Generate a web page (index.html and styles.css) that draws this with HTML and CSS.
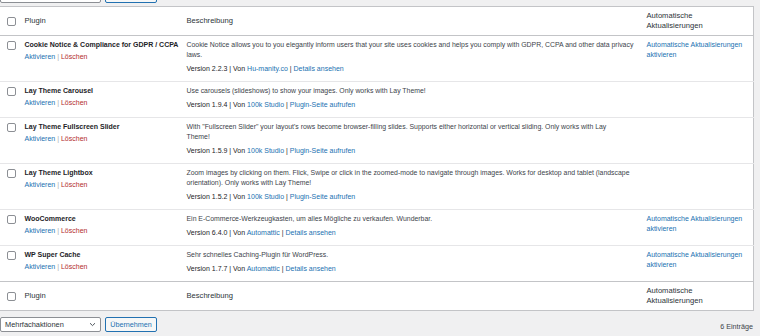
FILE: index.html
```html
<!DOCTYPE html>
<html>
<head>
    <meta charset="UTF-8">
    <title>Plugins</title>
    <link rel="stylesheet" href="styles.css">
</head>
<body>
    <div class="tablenav top">
        <div class="bulk">
            <div class="select"><span>Mehrfachaktionen</span><svg width="7" height="5" viewBox="0 0 7 5"><path d="M1 1.2 L3.5 3.6 L6 1.2" fill="none" stroke="#50575e" stroke-width="1"/></svg></div>
            <button class="apply">Übernehmen</button>
        </div>
    </div>

    <table class="plugins">
        <colgroup>
            <col class="col-cb">
            <col class="col-name">
            <col class="col-desc">
            <col class="col-auto">
        </colgroup>
        <thead>
            <tr>
                <td class="check"><span class="cb"></span></td>
                <th>Plugin</th>
                <th>Beschreibung</th>
                <th>Automatische Aktualisierungen</th>
            </tr>
        </thead>
        <tbody>
            <tr>
                <td class="check"><span class="cb"></span></td>
                <td class="name">
                    <strong>Cookie Notice &amp; Compliance for GDPR / CCPA</strong>
                    <div class="actions"><a class="link">Aktivieren</a> <span class="sep">|</span> <a class="delete">Löschen</a></div>
                </td>
                <td class="desc">
                    <p>Cookie Notice allows you to you elegantly inform users that your site uses cookies and helps you comply with GDPR, CCPA and other data privacy laws.</p>
                    <div class="meta">Version 2.2.3 | Von <a class="link">Hu-manity.co</a> | <a class="link">Details ansehen</a></div>
                </td>
                <td class="auto"><a class="link">Automatische Aktualisierungen aktivieren</a></td>
            </tr>
            <tr>
                <td class="check"><span class="cb"></span></td>
                <td class="name">
                    <strong>Lay Theme Carousel</strong>
                    <div class="actions"><a class="link">Aktivieren</a> <span class="sep">|</span> <a class="delete">Löschen</a></div>
                </td>
                <td class="desc">
                    <p>Use carousels (slideshows) to show your images. Only works with Lay Theme!</p>
                    <div class="meta">Version 1.9.4 | Von <a class="link">100k Studio</a> | <a class="link">Plugin-Seite aufrufen</a></div>
                </td>
                <td class="auto"></td>
            </tr>
            <tr>
                <td class="check"><span class="cb"></span></td>
                <td class="name">
                    <strong>Lay Theme Fullscreen Slider</strong>
                    <div class="actions"><a class="link">Aktivieren</a> <span class="sep">|</span> <a class="delete">Löschen</a></div>
                </td>
                <td class="desc">
                    <p>With "Fullscreen Slider" your layout's rows become browser-filling slides. Supports either horizontal or vertical sliding. Only works with Lay<br>Theme!</p>
                    <div class="meta">Version 1.5.9 | Von <a class="link">100k Studio</a> | <a class="link">Plugin-Seite aufrufen</a></div>
                </td>
                <td class="auto"></td>
            </tr>
            <tr>
                <td class="check"><span class="cb"></span></td>
                <td class="name">
                    <strong>Lay Theme Lightbox</strong>
                    <div class="actions"><a class="link">Aktivieren</a> <span class="sep">|</span> <a class="delete">Löschen</a></div>
                </td>
                <td class="desc">
                    <p>Zoom images by clicking on them. Flick, Swipe or click in the zoomed-mode to navigate through images. Works for desktop and tablet (landscape orientation). Only works with Lay Theme!</p>
                    <div class="meta">Version 1.5.2 | Von <a class="link">100k Studio</a> | <a class="link">Plugin-Seite aufrufen</a></div>
                </td>
                <td class="auto"></td>
            </tr>
            <tr>
                <td class="check"><span class="cb"></span></td>
                <td class="name">
                    <strong>WooCommerce</strong>
                    <div class="actions"><a class="link">Aktivieren</a> <span class="sep">|</span> <a class="delete">Löschen</a></div>
                </td>
                <td class="desc">
                    <p>Ein E-Commerce-Werkzeugkasten, um alles Mögliche zu verkaufen. Wunderbar.</p>
                    <div class="meta">Version 6.4.0 | Von <a class="link">Automattic</a> | <a class="link">Details ansehen</a></div>
                </td>
                <td class="auto"><a class="link">Automatische Aktualisierungen aktivieren</a></td>
            </tr>
            <tr>
                <td class="check"><span class="cb"></span></td>
                <td class="name">
                    <strong>WP Super Cache</strong>
                    <div class="actions"><a class="link">Aktivieren</a> <span class="sep">|</span> <a class="delete">Löschen</a></div>
                </td>
                <td class="desc">
                    <p>Sehr schnelles Caching-Plugin für WordPress.</p>
                    <div class="meta">Version 1.7.7 | Von <a class="link">Automattic</a> | <a class="link">Details ansehen</a></div>
                </td>
                <td class="auto"><a class="link">Automatische Aktualisierungen aktivieren</a></td>
            </tr>
        </tbody>
        <tfoot>
            <tr>
                <td class="check"><span class="cb"></span></td>
                <th>Plugin</th>
                <th>Beschreibung</th>
                <th>Automatische Aktualisierungen</th>
            </tr>
        </tfoot>
    </table>

    <div class="tablenav bottom">
        <div class="bulk">
            <div class="select"><span>Mehrfachaktionen</span><svg width="7" height="5" viewBox="0 0 7 5"><path d="M1 1.2 L3.5 3.6 L6 1.2" fill="none" stroke="#50575e" stroke-width="1"/></svg></div>
            <button class="apply">Übernehmen</button>
        </div>
        <div class="count">6 Einträge</div>
    </div>
</body>
</html>
```

FILE: styles.css
```css
* {
    margin: 0;
    padding: 0;
    box-sizing: border-box;
}

body {
    font-family: "Liberation Sans", Arial, sans-serif;
    font-size: 7px;
    line-height: 10px;
    color: #3c434a;
    background: #f0f0f1;
    width: 760px;
    height: 336px;
    overflow: hidden;
}

.tablenav {
    display: flex;
    align-items: center;
    justify-content: space-between;
    width: 753px;
}

.tablenav.top {
    margin-top: -12px;
    height: 15px;
}

.tablenav.bottom {
    margin-top: 6px;
    height: 15px;
}

.bulk {
    display: flex;
    gap: 4px;
    height: 15px;
}

.select {
    width: 101px;
    height: 15px;
    border: 1px solid #8c8f94;
    border-radius: 2px;
    background: #fff;
    display: flex;
    align-items: center;
    justify-content: space-between;
    padding: 0 4px 0 4px;
    color: #2c3338;
    font-size: 7.4px;
}

.apply {
    width: 52px;
    height: 15px;
    border: 1px solid #2271b1;
    border-radius: 2px;
    background: #f6f7f7;
    color: #2271b1;
    font-family: inherit;
    font-size: 7.2px;
}

.count {
    font-size: 7.2px;
    color: #3c434a;
    margin-top: 4px;
}

.plugins {
    margin-top: 3px;
    margin-left: -1px;
    width: 754px;
    border-collapse: collapse;
    background: #fff;
    border: 1px solid #c3c4c7;
    table-layout: fixed;
}

.col-cb { width: 19px; }
.col-name { width: 162px; }
.col-desc { width: 460px; }
.col-auto { width: 113px; }

th, td {
    text-align: left;
    vertical-align: top;
    padding: 4px 6px 7px 6px;
}

thead th, tfoot th, thead td, tfoot td {
    font-weight: normal;
    font-size: 7.6px;
    color: #2c3338;
    vertical-align: middle;
    padding: 4px 6px;
    height: 28px;
}

tfoot th, tfoot td {
    height: 29px;
}

thead tr {
    border-bottom: 1px solid #c3c4c7;
}

tfoot tr {
    border-top: 1px solid #c3c4c7;
}

tbody tr + tr {
    border-top: 1px solid #e6e6e8;
}

td.check {
    padding: 5px 0 0 7px;
}

thead td.check, tfoot td.check {
    padding: 0 0 0 7px;
}

.cb {
    display: block;
    width: 9px;
    height: 9px;
    border: 1px solid #8c8f94;
    border-radius: 2px;
    background: #fff;
}

.name strong {
    display: block;
    font-weight: bold;
    color: #1d2327;
    font-size: 7px;
    white-space: nowrap;
}

.actions {
    margin-top: 2px;
}

.link {
    color: #2271b1;
}

.delete {
    color: #b32d2e;
}

.sep {
    color: #a7aaad;
}

td.desc {
    padding-right: 4px;
}

.desc p {
    margin-bottom: 4px;
    font-size: 6.9px;
}

.meta {
    color: #1d2327;
}
```
